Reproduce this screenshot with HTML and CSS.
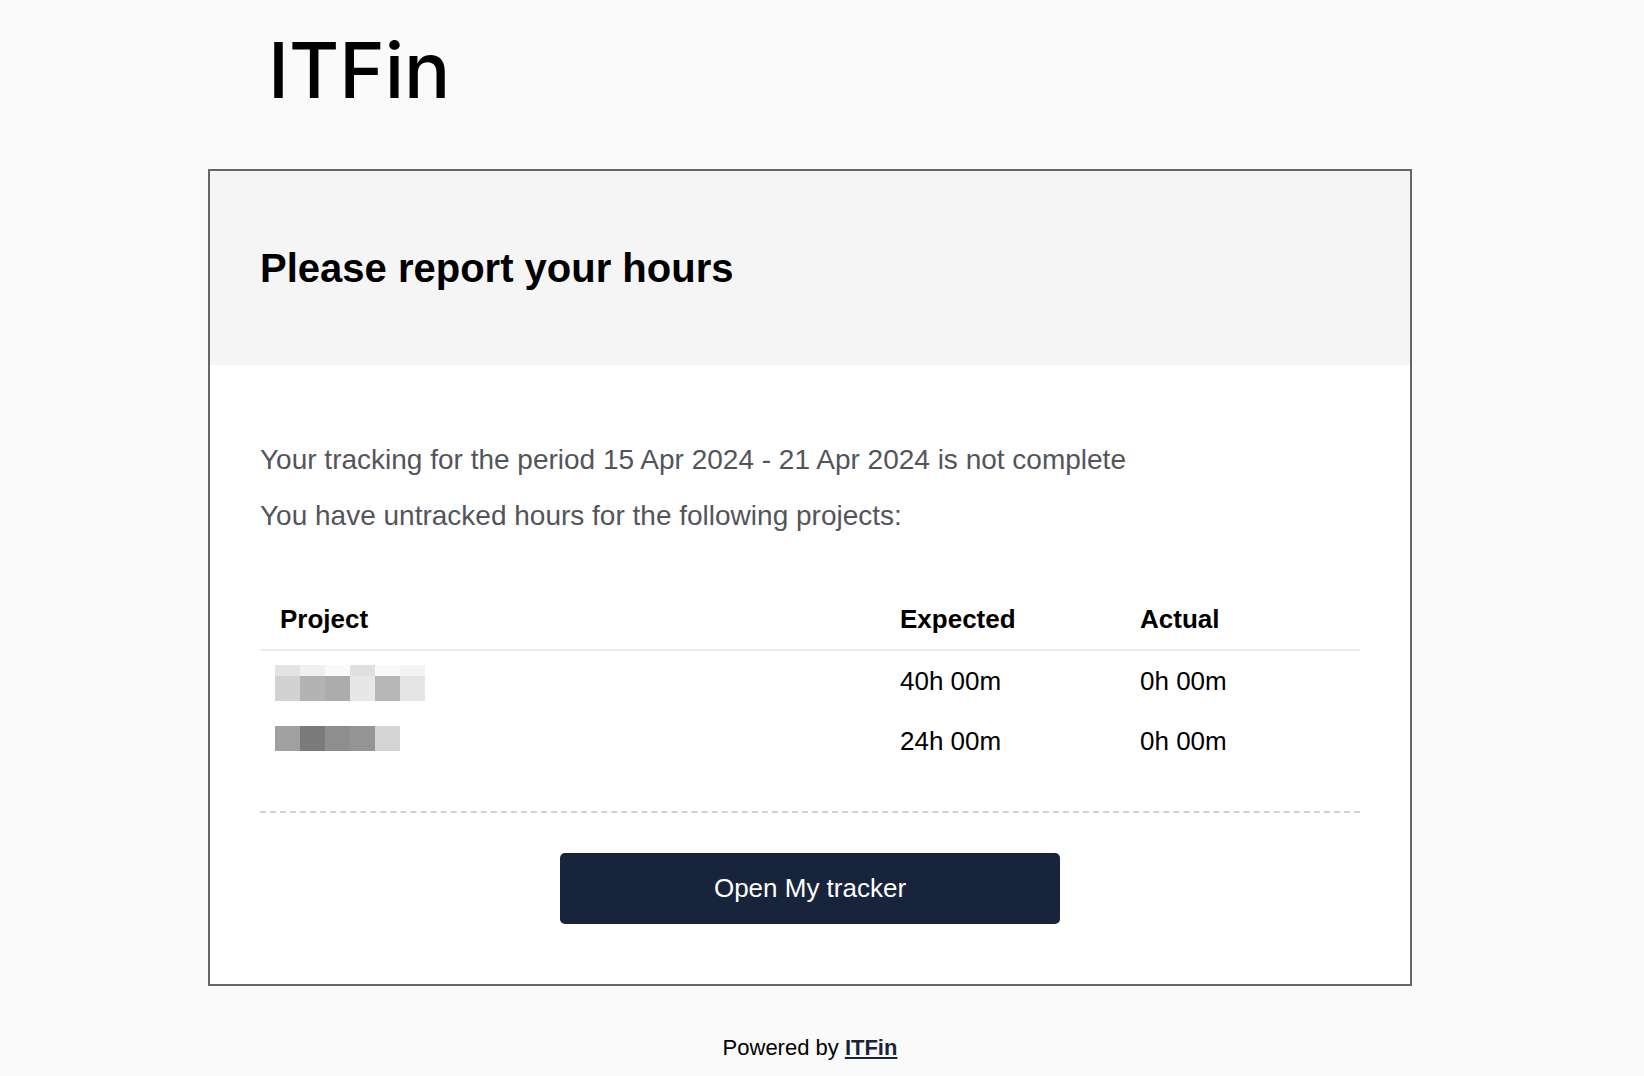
FILE: index.html
```html
<!DOCTYPE html>
<html lang="en">
<head>
<meta charset="utf-8">
<meta name="viewport" content="width=device-width, initial-scale=1">
<title>Please report your hours</title>
<link rel="stylesheet" href="styles.css">
</head>
<body>
<div class="mail">
  <header class="masthead"><span class="logo">ITFin</span></header>
  <main class="card">
    <div class="card-header">
      <h1 class="title">Please report your hours</h1>
    </div>
    <div class="card-body">
      <p class="text">Your tracking for the period 15 Apr 2024 - 21 Apr 2024 is not complete</p>
      <p class="text">You have untracked hours for the following projects:</p>
      <table class="projects">
        <thead>
          <tr><th class="col-project" scope="col">Project</th><th class="col-hours" scope="col">Expected</th><th class="col-hours" scope="col">Actual</th></tr>
        </thead>
        <tbody>
          <tr>
            <td class="redacted">
              <svg class="mosaic" width="150" height="60" viewBox="0 0 150 60" shape-rendering="crispEdges" role="img" aria-label="Hidden project name">
                <path fill="#e3e3e3" d="M0 14h25v11H0z"/><path fill="#f0f0f0" d="M25 14h25v11H25z"/><path fill="#fafafa" d="M50 14h25v11H50z"/><path fill="#e0e0e0" d="M75 14h25v11H75z"/><path fill="#fafafa" d="M100 14h25v11h-25z"/><path fill="#f3f3f3" d="M125 14h25v11h-25z"/>
                <path fill="#d2d2d2" d="M0 25h25v25H0z"/><path fill="#b3b3b3" d="M25 25h25v25H25z"/><path fill="#acacac" d="M50 25h25v25H50z"/><path fill="#e7e7e7" d="M75 25h25v25H75z"/><path fill="#b7b7b7" d="M100 25h25v25h-25z"/><path fill="#e5e5e5" d="M125 25h25v25h-25z"/>
              </svg>
            </td>
            <td>40h 00m</td><td>0h 00m</td>
          </tr>
          <tr>
            <td class="redacted">
              <svg class="mosaic" width="150" height="60" viewBox="0 0 150 60" shape-rendering="crispEdges" role="img" aria-label="Hidden project name">
                <path fill="#a0a0a0" d="M0 15h25v25H0z"/><path fill="#7a7a7a" d="M25 15h25v25H25z"/><path fill="#8e8e8e" d="M50 15h25v25H50z"/><path fill="#959595" d="M75 15h25v25H75z"/><path fill="#d4d4d4" d="M100 15h25v25h-25z"/>
              </svg>
            </td>
            <td>24h 00m</td><td>0h 00m</td>
          </tr>
        </tbody>
      </table>
      <div class="action"><a class="button" href="#tracker">Open My tracker</a></div>
    </div>
  </main>
  <footer class="footer">Powered by <a class="footer-link" href="#itfin">ITFin</a></footer>
</div>
</body>
</html>
```
FILE: styles.css
```css
* {
  box-sizing: border-box;
}

body {
  margin: 0;
  padding: 0 24px 0 0;
  background: #fafafa;
  color: #000;
  font-family: "Liberation Sans", Arial, Helvetica, sans-serif;
  font-size: 26px;
}

.mail {
  max-width: 1204px;
  margin: 0 auto;
}

.masthead {
  padding: 22px 60px 51px;
}

.logo {
  display: block;
  font-family: Inter, sans-serif;
  font-size: 77px;
  font-weight: 500;
  line-height: 96px;
}

.card {
  border: 2px solid #666;
  background: #fff;
}

.card-header {
  padding: 70px 50px;
  background: #f5f5f5;
}

.title {
  margin: 0;
  font-size: 40px;
  line-height: 54px;
}

.card-body {
  padding: 75px 50px 60px;
}

.text {
  margin: 0 0 16px;
  color: #54555c;
  font-size: 28px;
  line-height: 40px;
}

.projects {
  width: 100%;
  margin-top: 53px;
  border-collapse: separate;
  border-spacing: 0;
  table-layout: fixed;
}

.projects th,
.projects td {
  padding: 0 20px;
  line-height: 60px;
  text-align: left;
}

.projects th {
  border-bottom: 2px solid #ececec;
}

.col-hours {
  width: 240px;
}

.projects .redacted {
  padding: 0 15px;
}

.mosaic {
  display: block;
}

.action {
  margin-top: 40px;
  padding-top: 40px;
  border-top: 2px dashed #d0d0d0;
}

.button {
  display: block;
  max-width: 500px;
  margin: 0 auto;
  border-radius: 5px;
  background: #18243b;
  color: #fff;
  line-height: 71px;
  text-align: center;
  text-decoration: none;
}

.footer {
  padding: 47px 0 13px;
  font-size: 22px;
  line-height: 30px;
  text-align: center;
}

.footer-link {
  color: #18243b;
  font-weight: 700;
}
```
